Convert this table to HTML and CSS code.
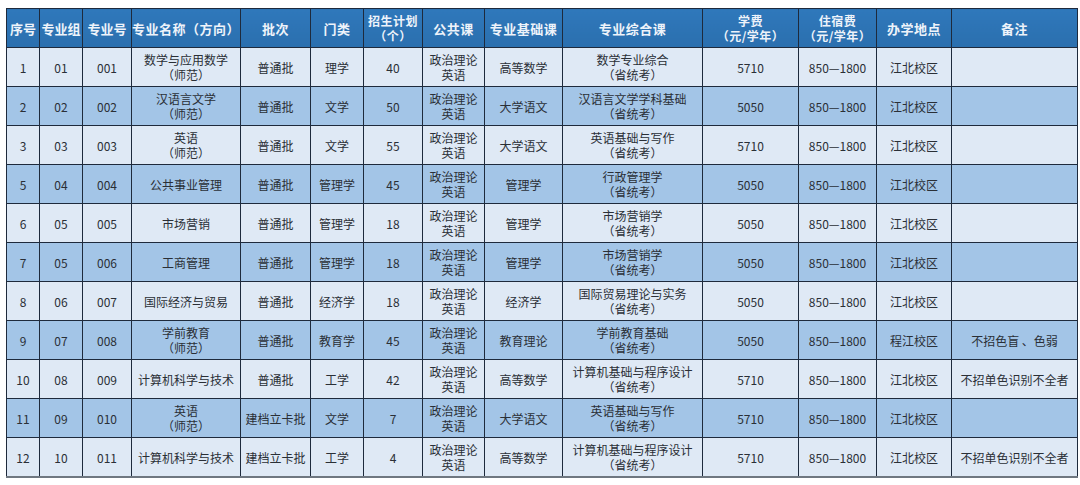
FILE: index.html
```html
<!DOCTYPE html>
<html lang="zh">
<head>
<meta charset="utf-8">
<link rel="stylesheet" href="styles.css">
</head>
<body>
<table class="plan">
<colgroup>
<col style="width:33px"><col style="width:43px"><col style="width:49px"><col style="width:109px"><col style="width:70px"><col style="width:53px"><col style="width:59px"><col style="width:62px"><col style="width:78px"><col style="width:140px"><col style="width:96px"><col style="width:78px"><col style="width:75px"><col style="width:126px">
</colgroup>
<thead>
<tr>
<th class="tight">序号</th><th class="tight">专业组</th><th class="tight">专业号</th><th>专业名称（方向）</th><th>批次</th><th>门类</th><th class="two">招生计划<br>（个）</th><th>公共课</th><th>专业基础课</th><th>专业综合课</th><th class="two">学费<br>（元/学年）</th><th class="two">住宿费<br>（元/学年）</th><th>办学地点</th><th>备注</th>
</tr>
</thead>
<tbody>
<tr class="light"><td>1</td><td>01</td><td>001</td><td>数学与应用数学<br>（师范）</td><td>普通批</td><td>理学</td><td>40</td><td>政治理论<br>英语</td><td>高等数学</td><td>数学专业综合<br>（省统考）</td><td>5710</td><td>850—1800</td><td>江北校区</td><td></td></tr>
<tr class="blue"><td>2</td><td>02</td><td>002</td><td>汉语言文学<br>（师范）</td><td>普通批</td><td>文学</td><td>50</td><td>政治理论<br>英语</td><td>大学语文</td><td>汉语言文学学科基础<br>（省统考）</td><td>5050</td><td>850—1800</td><td>江北校区</td><td></td></tr>
<tr class="light"><td>3</td><td>03</td><td>003</td><td>英语<br>（师范）</td><td>普通批</td><td>文学</td><td>55</td><td>政治理论<br>英语</td><td>大学语文</td><td>英语基础与写作<br>（省统考）</td><td>5710</td><td>850—1800</td><td>江北校区</td><td></td></tr>
<tr class="blue"><td>5</td><td>04</td><td>004</td><td>公共事业管理</td><td>普通批</td><td>管理学</td><td>45</td><td>政治理论<br>英语</td><td>管理学</td><td>行政管理学<br>（省统考）</td><td>5050</td><td>850—1800</td><td>江北校区</td><td></td></tr>
<tr class="light"><td>6</td><td>05</td><td>005</td><td>市场营销</td><td>普通批</td><td>管理学</td><td>18</td><td>政治理论<br>英语</td><td>管理学</td><td>市场营销学<br>（省统考）</td><td>5050</td><td>850—1800</td><td>江北校区</td><td></td></tr>
<tr class="blue"><td>7</td><td>05</td><td>006</td><td>工商管理</td><td>普通批</td><td>管理学</td><td>18</td><td>政治理论<br>英语</td><td>管理学</td><td>市场营销学<br>（省统考）</td><td>5050</td><td>850—1800</td><td>江北校区</td><td></td></tr>
<tr class="light"><td>8</td><td>06</td><td>007</td><td>国际经济与贸易</td><td>普通批</td><td>经济学</td><td>18</td><td>政治理论<br>英语</td><td>经济学</td><td>国际贸易理论与实务<br>（省统考）</td><td>5050</td><td>850—1800</td><td>江北校区</td><td></td></tr>
<tr class="blue"><td>9</td><td>07</td><td>008</td><td>学前教育<br>（师范）</td><td>普通批</td><td>教育学</td><td>45</td><td>政治理论<br>英语</td><td>教育理论</td><td>学前教育基础<br>（省统考）</td><td>5050</td><td>850—1800</td><td>程江校区</td><td>不招色盲&nbsp;、色弱</td></tr>
<tr class="light"><td>10</td><td>08</td><td>009</td><td>计算机科学与技术</td><td>普通批</td><td>工学</td><td>42</td><td>政治理论<br>英语</td><td>高等数学</td><td>计算机基础与程序设计<br>（省统考）</td><td>5710</td><td>850—1800</td><td>江北校区</td><td>不招单色识别不全者</td></tr>
<tr class="blue"><td>11</td><td>09</td><td>010</td><td>英语<br>（师范）</td><td>建档立卡批</td><td>文学</td><td>7</td><td>政治理论<br>英语</td><td>大学语文</td><td>英语基础与写作<br>（省统考）</td><td>5710</td><td>850—1800</td><td>江北校区</td><td></td></tr>
<tr class="light"><td>12</td><td>10</td><td>011</td><td>计算机科学与技术</td><td>建档立卡批</td><td>工学</td><td>4</td><td>政治理论<br>英语</td><td>高等数学</td><td>计算机基础与程序设计<br>（省统考）</td><td>5710</td><td>850—1800</td><td>江北校区</td><td>不招单色识别不全者</td></tr>
</tbody>
</table>
</body>
</html>
```

FILE: styles.css
```css
html, body {
  margin: 0;
  padding: 0;
  background: #ffffff;
}

body {
  padding: 8px 0 0 6px;
  font-family: "Noto Sans CJK SC", "Noto Sans", "Liberation Sans", sans-serif;
}

.plan {
  border-collapse: collapse;
  table-layout: fixed;
  width: 1071px;
  border: 1px solid #3b4758;
  border-bottom: 2px solid #6f7780;
}

.plan th,
.plan td {
  border: 1px solid #1e2a3c;
  padding: 0;
  text-align: center;
  vertical-align: middle;
  height: 38px;
  overflow: hidden;
  white-space: nowrap;
}

.plan th {
  background: linear-gradient(#2f78bb, #2b6fae);
  color: #eef3fa;
  font-weight: bold;
  font-size: 13px;
  line-height: 15px;
  letter-spacing: 0.5px;
}

.plan th.tight {
  letter-spacing: 0;
}

.plan th.two {
  font-size: 12px;
  line-height: 15px;
  letter-spacing: 0.5px;
}

.plan td {
  color: #2a2f36;
  font-size: 12px;
  line-height: 15px;
}

.plan tr.light td {
  background: #dfe9f5;
}

.plan tr.blue td {
  background: #a3c5e7;
}
```
